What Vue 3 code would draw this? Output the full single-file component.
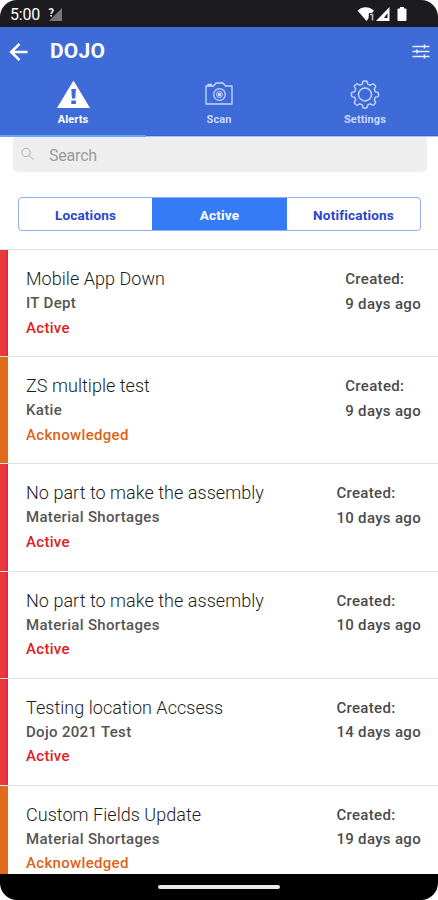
<script setup>
const alerts = [
  { title: 'Mobile App Down', place: 'IT Dept', status: 'Active', age: '9 days ago' },
  { title: 'ZS multiple test', place: 'Katie', status: 'Acknowledged', age: '9 days ago' },
  { title: 'No part to make the assembly', place: 'Material Shortages', status: 'Active', age: '10 days ago' },
  { title: 'No part to make the assembly', place: 'Material Shortages', status: 'Active', age: '10 days ago' },
  { title: 'Testing location Accsess', place: 'Dojo 2021 Test', status: 'Active', age: '14 days ago' },
  { title: 'Custom Fields Update', place: 'Material Shortages', status: 'Acknowledged', age: '19 days ago' },
]

// Gear outline: eight soft teeth around (15, 15.5), the first pointing up
const gear = Array.from({ length: 160 }, (_, i) => {
  const t = (i / 160) * Math.PI * 2
  const r = 12.1 + 1.500 * Math.tanh(2.600 * Math.cos(8 * t))
  return `${(15 + r * Math.sin(t)).toFixed(2)},${(15.5 - r * Math.cos(t)).toFixed(2)}`
}).join(' ')
</script>

<template>
  <div class="phone">
    <div class="status-bar">
      <span class="clock">5:00</span>
      <svg class="sim" width="15" height="15" viewBox="0 0 15 15">
        <path d="M14 1v13H1z" fill="#77777a" />
        <path d="M1.300 3.200C1.500 1.300 5 1.200 5 3.300 5 4.800 3.200 5 3.200 6.800M3.200 8v1.500" fill="none" stroke="#fff" stroke-width="1.600" />
      </svg>
      <svg class="radios" width="54" height="18" viewBox="0 0 54 18">
        <path d="M1.500 5.500C6 1 13 1 18 5.500L16 8h-3l-.5 5.500L10.500 16z" fill="#fff" />
        <path d="M14 9.500h2.500v6" fill="none" stroke="#bbb" stroke-width="1.600" />
        <path d="M33.500 2v14H20z" fill="#fff" />
        <path d="M31.500 8v5h-3.500z" fill="#1c1b20" />
        <path d="M44 2h4v1.500h1.500q1 0 1 1V15q0 1-1 1h-7q-1 0-1-1V4.500q0-1 1-1H44z" fill="#fff" />
      </svg>
    </div>

    <header class="app-bar">
      <svg class="back" width="20" height="20" viewBox="0 0 20 20" fill="none" stroke="#fff" stroke-width="2.600">
        <path d="M10.500 1.800 2.200 10l8.300 8.200M2.500 10H18.500" />
      </svg>
      <h1>DOJO</h1>
      <svg width="18" height="16" viewBox="0 0 18 16" fill="none" stroke="#e6efff" stroke-width="1.600">
        <path d="M.5 2.500h17M.5 7.500h17M.5 12.500h17M12.500 .5v4M5 5.500v4M12.500 10.500v4" />
      </svg>
    </header>

    <nav class="tabs">
      <div class="tab selected">
        <svg width="34" height="30" viewBox="0 0 34 30">
          <path d="M17.500 1.500 34 29H1z" fill="#fff" />
          <path d="M15.300 10h4.600l-.6 9.500h-3.400zM15.300 21.500h4.600v3.500h-4.600z" fill="#3f6bd9" />
        </svg>
        <span>Alerts</span>
      </div>
      <div class="tab">
        <svg width="30" height="30" viewBox="0 0 30 30" fill="none" stroke="#c7d8ff" stroke-width="1.300" stroke-linejoin="round">
          <path d="M2 7h7.500l2.500-3h7l2.500 3H28v18H2zM4 7V5.500h3.500V7" />
          <circle cx="15.500" cy="15.500" r="5.800" />
          <circle cx="15.500" cy="15.500" r="3" stroke-width="1" />
          <circle cx="15.500" cy="15.500" r="1.200" fill="#fff" />
        </svg>
        <span>Scan</span>
      </div>
      <div class="tab">
        <svg width="30" height="30" viewBox="0 0 30 30" fill="none" stroke="#c7d8ff" stroke-width="1.400" stroke-linejoin="round">
          <polygon :points="gear" />
          <circle cx="15" cy="15.500" r="6.500" />
        </svg>
        <span>Settings</span>
      </div>
    </nav>
    <div class="indicator"><i></i></div>

    <main>
      <label class="search">
        <svg width="14" height="14" viewBox="0 0 14 14" fill="none" stroke="#b0b0b0" stroke-width="1">
          <circle cx="5" cy="5.500" r="4.200" />
          <path d="m8 8.500 4.500 4" />
        </svg>
        <span>Search</span>
      </label>

      <div class="segments">
        <span>Locations</span>
        <span class="on">Active</span>
        <span>Notifications</span>
      </div>

      <ul class="list">
        <li v-for="(a, i) in alerts" :key="i" :class="a.status.toLowerCase()">
          <div class="bar"></div>
          <div class="info">
            <div class="title">{{ a.title }}</div>
            <div class="place">{{ a.place }}</div>
            <div class="status">{{ a.status }}</div>
          </div>
          <div class="created">Created:<br />{{ a.age }}</div>
        </li>
      </ul>
    </main>

    <footer><i></i></footer>
  </div>
</template>

<style>
body {
  background: #fff;
}
</style>

<style scoped>
* {
  box-sizing: border-box;
}
svg {
  display: block;
  flex: none;
}
.phone {
  display: flex;
  flex-direction: column;
  width: 438px;
  height: 900px;
  overflow: hidden;
  border-radius: 17px;
  background: #fff;
  font-family: Roboto, "Liberation Sans", sans-serif;
}
.status-bar {
  display: flex;
  align-items: center;
  flex: none;
  height: 27px;
  padding: 1px 28px 0 10px;
  background: #1c1b20;
  color: #fff;
}
.clock {
  padding-top: 1px;
  font-size: 16px;
  letter-spacing: -0.200px;
  line-height: 26px;
  width: 38px;
}
.radios {
  margin-left: auto;
}
.app-bar {
  display: flex;
  align-items: center;
  flex: none;
  height: 49px;
  padding: 0 8px 0 9px;
  background: #3f6bd9;
}
h1 {
  flex: 1;
  margin: 0 0 0 21px;
  color: #fff;
  font-size: 21px;
  font-weight: 700;
  letter-spacing: 0.200px;
  line-height: 49px;
}
.tabs {
  display: grid;
  grid-template-columns: repeat(3, 1fr);
  flex: none;
  height: 59px;
  padding-top: 3px;
  background: #3f6bd9;
}
.tab {
  display: flex;
  flex-direction: column;
  align-items: center;
  color: #c7d8ff;
  font-size: 11px;
  font-weight: 700;
  letter-spacing: 0.100px;
  line-height: 14px;
}
.tab span {
  margin-top: 4px;
}
.selected {
  color: #fff;
}
.indicator {
  flex: none;
  height: 2px;
  background: linear-gradient(#3c5fd0 50%, #a9c4f6 50%);
}
.indicator i {
  display: block;
  width: 146px;
  height: 2px;
  background: #65a5fb;
}
main {
  flex: 1;
  min-height: 0;
  overflow: hidden;
}
.search {
  display: flex;
  align-items: center;
  gap: 14px;
  height: 35px;
  margin: 0 11px 0 13px;
  padding-left: 8px;
  border-radius: 2px 2px 5px 5px;
  background: #eee;
  color: #9b9b9b;
  font-size: 16px;
  letter-spacing: -0.200px;
}
.search svg {
  margin-top: -2px;
}
.search span {
  padding-top: 2px;
}
.segments {
  display: grid;
  grid-template-columns: 133px 135px 1fr;
  height: 34px;
  margin: 25px 17px 0 18px;
  overflow: hidden;
  border: 1px solid #94adf3;
  border-radius: 4px;
  color: #2845cc;
  font-size: 13.500px;
  font-weight: 700;
  letter-spacing: 0.200px;
  line-height: 35px;
  text-align: center;
}
.segments .on {
  background: #347bf5;
  color: #fff;
}
.list {
  margin: 18px 0 0;
  padding: 0;
  list-style: none;
}
li {
  display: flex;
  height: 107.200px;
  padding-right: 17px;
  border-top: 1px solid #e2e2e2;
}
.bar {
  flex: none;
  width: 8px;
  background: linear-gradient(90deg, #e8383c 70%, #e2283a 80%);
}
.acknowledged .bar {
  background: #e06b1c;
}
.info {
  flex: 1;
  padding: 17px 0 0 18px;
}
.title {
  color: #1c1c1c;
  font-size: 18px;
  font-weight: 300;
  letter-spacing: 0.040px;
  line-height: 24px;
}
.place,
.status,
.created {
  font-size: 15px;
  font-weight: 500;
  letter-spacing: 0.320px;
  line-height: 24.500px;
}
.place {
  color: #555;
}
.status {
  line-height: 24px;
  color: #e01c22;
}
.acknowledged .status {
  color: #dc6418;
}
.created {
  padding-top: 17px;
  color: #4b4b4b;
}
footer {
  display: flex;
  justify-content: center;
  flex: none;
  height: 26px;
  padding-top: 11px;
  background: #000;
}
footer i {
  width: 122px;
  height: 4px;
  border-radius: 2px;
  background: #e8e8e8;
}
</style>
